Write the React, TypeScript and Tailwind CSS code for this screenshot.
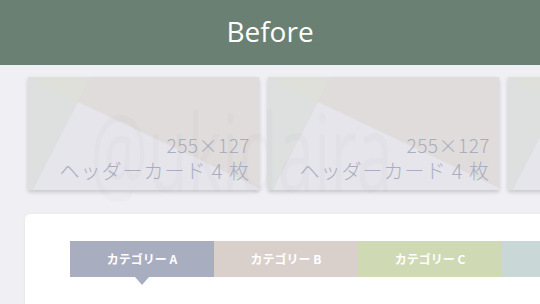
import React from 'react';

const cards = [0, 1, 2];

const tabs = [
    { label: 'カテゴリー A', bg: 'bg-[#a8adbf]', active: true },
    { label: 'カテゴリー B', bg: 'bg-[#d9cfcb]', active: false },
    { label: 'カテゴリー C', bg: 'bg-[#cfd9b4]', active: false },
    { label: '新着記事', bg: 'bg-[#c9d8d6]', active: false },
];

const CardArt = () => (
    <svg className="absolute inset-0 w-full h-full" viewBox="0 0 231 113" preserveAspectRatio="none">
        <rect width="231" height="113" fill="#e0dcdb" />
        <polygon points="0,0 50,25 5,113 0,113" fill="#dde0df" />
        <polygon points="0,0 62,0 50,25" fill="#dfe0d9" />
        <polygon points="50,25 231,111 231,113 5,113" fill="#e6e5ec" />
    </svg>
);

const HeaderCard = () => (
    <div className="relative w-[231px] h-[113px] shrink-0 shadow-[0_2px_4px_rgba(0,0,0,0.18)] overflow-hidden">
        <CardArt />
        <div className="relative h-full flex flex-col items-end justify-end pr-[9px] pb-[5px] text-[#a9aebf] font-['Noto_Sans_CJK_JP',sans-serif] font-light">
            <div className="text-[19px] leading-[24px] tracking-[0.5px]">255×127</div>
            <div className="text-[20px] leading-[28px] tracking-[1px]">ヘッダーカード 4 枚</div>
        </div>
    </div>
);

export default function App() {
    return (
        <div className="w-[540px] h-[304px] overflow-hidden bg-[#f0eff4] font-['Noto_Sans',sans-serif]">
            <header className="h-[65px] bg-[#6a8072] flex items-center justify-center">
                <h1 className="text-white text-[28px] leading-none font-['Open_Sans',sans-serif] pb-[3px]">Before</h1>
            </header>

            <div className="relative">
                <div className="flex gap-[9px] pl-[28px] pt-[12px] w-[800px]">
                    {cards.map(i => <HeaderCard key={i} />)}
                </div>
                <div className="absolute left-[90px] top-[32px] text-[108px] leading-none font-['Open_Sans',sans-serif] text-[#8a8a9c] opacity-[0.035] scale-x-[0.6] origin-left pointer-events-none whitespace-nowrap">
                    @ukidaira
                </div>
            </div>

            <div className="ml-[25px] mt-[24px] w-[600px] h-[120px] bg-white rounded-tl-[5px] shadow-[0_0_3px_rgba(0,0,0,0.06)] pt-[27px] pl-[45px]">
                <div className="flex">
                    {tabs.map(t => (
                        <div key={t.label} className={`relative w-[144px] h-[36px] shrink-0 flex items-center justify-center ${t.bg}`}>
                            <span className="text-white text-[12px] font-bold font-['Noto_Sans_CJK_JP',sans-serif]">{t.label}</span>
                            {t.active && (
                                <div className="absolute left-1/2 -translate-x-1/2 top-full w-0 h-0 border-l-[7px] border-r-[7px] border-t-[8px] border-l-transparent border-r-transparent border-t-[#a8adbf]" />
                            )}
                        </div>
                    ))}
                </div>
            </div>
        </div>
    );
}
